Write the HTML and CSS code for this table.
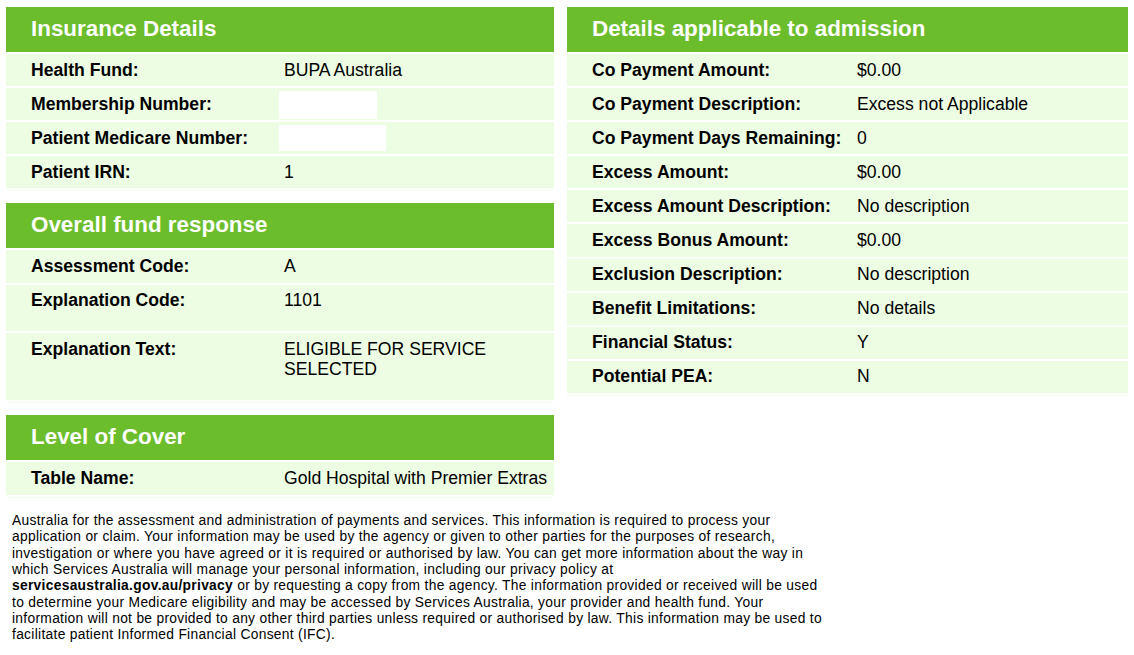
FILE: index.html
```html
<!DOCTYPE html>
<html lang="en">
<head>
<meta charset="utf-8">
<title>Eligibility details</title>
<link rel="stylesheet" href="styles.css">
</head>
<body>
<div class="page">
  <div class="columns">
    <div class="col">
      <section class="panel panel-ins">
        <h2 class="panel-title">Insurance Details</h2>
        <div class="row"><div class="label">Health Fund:</div><div class="value">BUPA Australia</div></div>
        <div class="row"><div class="label">Membership Number:</div><div class="value"><span class="redact redact-a"></span></div></div>
        <div class="row"><div class="label">Patient Medicare Number:</div><div class="value"><span class="redact redact-b"></span></div></div>
        <div class="row"><div class="label">Patient IRN:</div><div class="value">1</div></div>
      </section>
      <section class="panel panel-ins">
        <h2 class="panel-title">Overall fund response</h2>
        <div class="row"><div class="label">Assessment Code:</div><div class="value">A</div></div>
        <div class="row row-tall"><div class="label">Explanation Code:</div><div class="value">1101</div></div>
        <div class="row row-taller"><div class="label">Explanation Text:</div><div class="value">ELIGIBLE FOR SERVICE SELECTED</div></div>
      </section>
      <section class="panel panel-ins">
        <h2 class="panel-title">Level of Cover</h2>
        <div class="row"><div class="label">Table Name:</div><div class="value">Gold Hospital with Premier Extras</div></div>
      </section>
    </div>
    <div class="col">
      <section class="panel panel-adm">
        <h2 class="panel-title">Details applicable to admission</h2>
        <div class="row"><div class="label">Co Payment Amount:</div><div class="value">$0.00</div></div>
        <div class="row"><div class="label">Co Payment Description:</div><div class="value">Excess not Applicable</div></div>
        <div class="row"><div class="label">Co Payment Days Remaining:</div><div class="value">0</div></div>
        <div class="row"><div class="label">Excess Amount:</div><div class="value">$0.00</div></div>
        <div class="row"><div class="label">Excess Amount Description:</div><div class="value">No description</div></div>
        <div class="row"><div class="label">Excess Bonus Amount:</div><div class="value">$0.00</div></div>
        <div class="row"><div class="label">Exclusion Description:</div><div class="value">No description</div></div>
        <div class="row"><div class="label">Benefit Limitations:</div><div class="value">No details</div></div>
        <div class="row"><div class="label">Financial Status:</div><div class="value">Y</div></div>
        <div class="row"><div class="label">Potential PEA:</div><div class="value">N</div></div>
      </section>
    </div>
  </div>
  <div class="notice">
    <p class="notice-text">Australia for the assessment and administration of payments and services. This information is required to process your<br>application or claim. Your information may be used by the agency or given to other parties for the purposes of research,<br>investigation or where you have agreed or it is required or authorised by law. You can get more information about the way in<br>which Services Australia will manage your personal information, including our privacy policy at<br><strong>servicesaustralia.gov.au/privacy</strong> or by requesting a copy from the agency. The information provided or received will be used<br>to determine your Medicare eligibility and may be accessed by Services Australia, your provider and health fund. Your<br>information will not be provided to any other third parties unless required or authorised by law. This information may be used to<br>facilitate patient Informed Financial Consent (IFC).</p>
  </div>
</div>
</body>
</html>
```

FILE: styles.css
```css
html, body {
  margin: 0;
  padding: 0;
  background: #ffffff;
  color: #000000;
  font-family: "Liberation Sans", Arial, sans-serif;
  overflow: hidden;
}

.page {
  padding: 7px 6px 0;
}

.columns {
  display: grid;
  grid-template-columns: 548px 561px;
  column-gap: 13px;
  align-items: start;
}

.col {
  display: flex;
  flex-direction: column;
  gap: 12px;
}

.panel {
  display: flex;
  flex-direction: column;
  gap: 2px;
}

.panel::after {
  content: "";
  height: 1px;
  background: #f3fdec;
}

.panel-title {
  margin: 0;
  height: 45px;
  box-sizing: border-box;
  padding: 0 0 2px 25px;
  background: #6bbd2b;
  color: #ffffff;
  font-size: 22.4px;
  font-weight: bold;
  display: flex;
  align-items: center;
}

.row {
  display: grid;
  grid-template-columns: 253px 1fr;
  background: #edfde3;
  padding: 6.6px 4px 6px 25px;
  font-size: 17.6px;
  line-height: 19.5px;
}

.panel-adm .row {
  grid-template-columns: 265px 1fr;
}

.label {
  font-weight: bold;
}

.row-tall {
  padding-bottom: 20.9px;
}

.row-taller {
  padding-bottom: 21.4px;
}

.redact {
  display: block;
  background: #ffffff;
  margin-left: -5px;
}

.redact-a {
  width: 98px;
  height: 28px;
  margin-top: -3.6px;
  margin-bottom: -4.9px;
}

.redact-b {
  width: 107px;
  height: 26px;
  margin-top: -3.6px;
  margin-bottom: -2.9px;
}

.notice {
  margin-top: 15.5px;
  padding-left: 6px;
}

.notice-text {
  margin: 0;
  font-size: 13.8px;
  line-height: 16.3px;
  letter-spacing: 0.3px;
  white-space: nowrap;
}

.notice-text strong {
  font-weight: bold;
}
```
